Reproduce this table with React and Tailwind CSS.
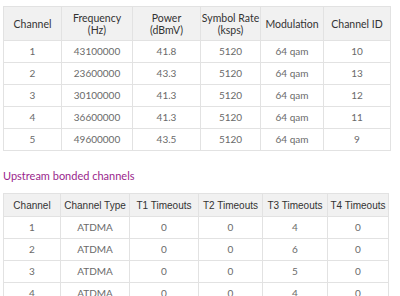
import React from "react";

const down = [
  ["1", "43100000", "41.8", "5120", "64 qam", "10"],
  ["2", "23600000", "43.3", "5120", "64 qam", "13"],
  ["3", "30100000", "41.3", "5120", "64 qam", "12"],
  ["4", "36600000", "41.3", "5120", "64 qam", "11"],
  ["5", "49600000", "43.5", "5120", "64 qam", "9"],
];

const up = [
  ["1", "ATDMA", "0", "0", "4", "0"],
  ["2", "ATDMA", "0", "0", "6", "0"],
  ["3", "ATDMA", "0", "0", "5", "0"],
  ["4", "ATDMA", "0", "0", "4", "0"],
];

const downCols = ["w-[58px]", "w-[71px]", "w-[68px]", "w-[60px]", "w-[63px]", "w-[67px]"];
const upCols = ["w-[57px]", "w-[69px]", "w-[69px]", "w-[64px]", "w-[65px]", "w-[61px]"];

export default function App() {
  return (
    <div className="w-[400px] h-[296px] overflow-hidden bg-white pl-[3px] pt-[6px] font-['Lato','Noto_Sans',sans-serif]">
      <table className="border-collapse table-fixed w-[387px] text-[10.5px]">
        <thead>
          <tr className="bg-[#f1f1f1] text-[#333] h-[34px]">
            {[
              ["Channel"],
              ["Frequency", "(Hz)"],
              ["Power", "(dBmV)"],
              ["Symbol Rate", "(ksps)"],
              ["Modulation"],
              ["Channel ID"],
            ].map((h, i) => (
              <th key={i} className={`${downCols[i]} border border-[#e2e2e2] font-normal leading-[12px] px-0 whitespace-nowrap`}>
                {h.map((l) => (
                  <div key={l}>{l}</div>
                ))}
              </th>
            ))}
          </tr>
        </thead>
        <tbody>
          {down.map((r, i) => (
            <tr key={i} className="h-[22px] text-[#6a6a6a]">
              {r.map((c, j) => (
                <td key={j} className="border border-[#e2e2e2] text-center text-[10px]">
                  {c}
                </td>
              ))}
            </tr>
          ))}
        </tbody>
      </table>

      <div className="mt-[18px] mb-[10px] text-[11px] leading-[14px] text-[#9a1f8c]">
        Upstream bonded channels
      </div>

      <table className="border-collapse table-fixed w-[385px]">
        <thead>
          <tr className="bg-[#f1f1f1] text-[#333] h-[23px]">
            {["Channel", "Channel Type", "T1 Timeouts", "T2 Timeouts", "T3 Timeouts", "T4 Timeouts"].map((h, i) => (
              <th key={h} className={`${upCols[i]} border border-[#e2e2e2] font-normal text-[10px] font-['Liberation_Sans',Arial,sans-serif] px-0 whitespace-nowrap`}>
                {h}
              </th>
            ))}
          </tr>
        </thead>
        <tbody>
          {up.map((r, i) => (
            <tr key={i} className="h-[22px] text-[#6a6a6a]">
              {r.map((c, j) => (
                <td key={j} className="border border-[#e2e2e2] text-center text-[10px]">
                  {c}
                </td>
              ))}
            </tr>
          ))}
        </tbody>
      </table>
    </div>
  );
}
